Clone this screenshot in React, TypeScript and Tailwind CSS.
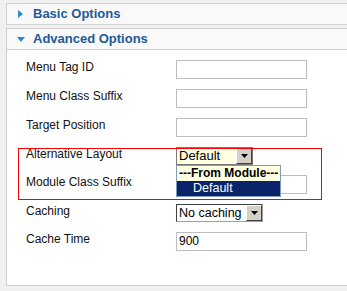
const font = { fontFamily: '"Liberation Sans", Arial, sans-serif' }

function Field({ value = "" }: { value?: string }) {
  return (
    <div className="w-[131px] h-[19px] border border-[#bdbdbd] bg-white text-[12px] leading-[17px] pl-[2px] text-black">
      {value}
    </div>
  )
}

function DropButton() {
  return (
    <div className="w-[16px] h-full bg-[#d4d0c8] border-t border-l border-t-white border-l-white border-r border-b border-r-[#404040] border-b-[#404040] flex items-center justify-center">
      <svg width="7" height="4" viewBox="0 0 7 4">
        <path d="M0 0h7L3.5 4z" fill="#000" />
      </svg>
    </div>
  )
}

function Row({ label, children }: { label: string; children: React.ReactNode }) {
  return (
    <div className="flex items-start">
      <div className="w-[150px] text-[12px] leading-[14px] text-[#111]">{label}</div>
      {children}
    </div>
  )
}

export default function App() {
  return (
    <div
      className="w-[347px] h-[291px] bg-[#f0f0f0] overflow-hidden pl-[6px] pt-[3px] flex flex-col gap-[3px] relative"
      style={font}
    >
      <div className="h-[22px] border border-r-0 border-[#d0d0d0] bg-[#f9f9f9] flex items-center pl-[11px] gap-[10px]">
        <svg width="5" height="8" viewBox="0 0 5 8">
          <path d="M0 0L5 4L0 8z" fill="#2c8ac6" />
        </svg>
        <span className="text-[13px] font-bold text-[#1c5a98]">Basic Options</span>
      </div>

      <div className="h-[258px] border border-r-0 border-[#d0d0d0] bg-white flex flex-col">
        <div className="h-[21px] shrink-0 border-b border-[#d0d0d0] bg-[#f9f9f9] flex items-center pl-[10px] gap-[8px]">
          <svg width="8" height="5" viewBox="0 0 8 5">
            <path d="M0 0H8L4 5z" fill="#2c8ac6" />
          </svg>
          <span className="text-[13px] font-bold text-[#1c5a98]">Advanced Options</span>
        </div>

        <div className="flex flex-col gap-[10px] pt-[10px] pl-[19px]">
          <Row label="Menu Tag ID">
            <Field />
          </Row>
          <Row label="Menu Class Suffix">
            <Field />
          </Row>
          <Row label="Target Position">
            <Field />
          </Row>
          <Row label="Alternative Layout">
            <div className="relative">
              <div className="w-[77px] h-[18px] border border-[#7a7a7a] bg-[#ffffe1] flex">
                <span className="flex-1 text-[13px] leading-[16px] pl-[2px] text-black">Default</span>
                <DropButton />
              </div>
              <div className="absolute left-0 top-[18px] w-[105px] border border-[#7f9db9] bg-[#ffffe1] z-10 text-[12.5px] leading-[15px] whitespace-nowrap">
                <div className="font-bold text-[12px] pl-[2px] text-black">---From Module---</div>
                <div className="bg-[#0a246a] text-white pl-[16px]">Default</div>
              </div>
            </div>
          </Row>
          <Row label="Module Class Suffix">
            <Field />
          </Row>
          <Row label="Caching">
            <div className="w-[87px] h-[18px] border border-t-[#404040] border-l-[#404040] border-r-[#a0a0a0] border-b-[#a0a0a0] bg-white flex">
              <span className="flex-1 text-[12.5px] leading-[16px] pl-[2px] text-black whitespace-nowrap">No caching</span>
              <DropButton />
            </div>
          </Row>
          <Row label="Cache Time">
            <Field value="900" />
          </Row>
        </div>
      </div>

      <div className="absolute left-[18px] top-[148px] w-[304px] h-[52px] border border-[#ff0000] pointer-events-none" />
    </div>
  )
}
